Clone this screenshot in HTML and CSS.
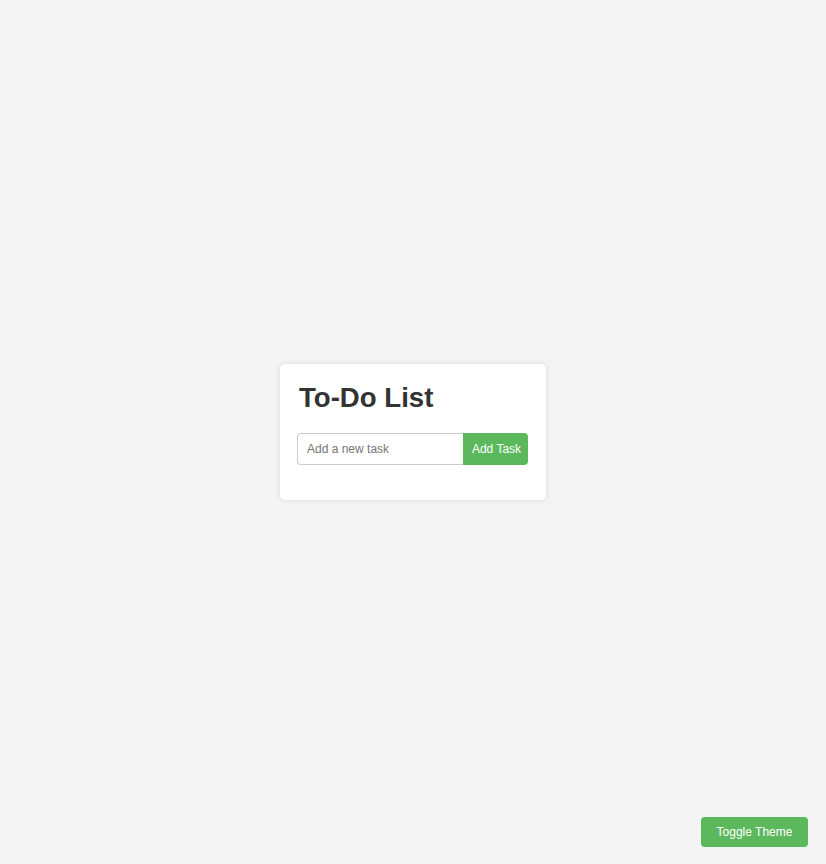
FILE: index.html
```html
<!DOCTYPE html>
<html lang="en">
<head>
<meta charset="utf-8">
<title>To-Do List</title>
<link rel="stylesheet" href="styles.css">
</head>
<body>
<div class="card">
  <h1 class="title">To-Do List</h1>
  <div class="add-row">
    <input class="task-input" type="text" placeholder="Add a new task">
    <button class="add-btn">Add Task</button>
  </div>
  <ul class="task-list"></ul>
</div>
<button class="theme-btn">Toggle Theme</button>
</body>
</html>
```
FILE: styles.css
```css
html, body {
  margin: 0;
  padding: 0;
}
body {
  background: #f4f4f4;
  font-family: "Liberation Sans", Arial, sans-serif;
  color: #333;
  height: 100vh;
  display: flex;
  align-items: center;
  justify-content: center;
}
.card {
  width: 231px;
  background: #fff;
  border-radius: 5px;
  padding: 18px 18px 0 17px;
  box-shadow: 0 0 6px rgba(0,0,0,0.1);
  height: 118px;
}
.title {
  margin: 0 0 19px 2px;
  font-size: 27.6px;
  font-weight: bold;
  line-height: 32px;
  color: #333;
}
.add-row {
  display: flex;
  height: 32px;
}
.task-input {
  flex: 1;
  min-width: 0;
  box-sizing: border-box;
  height: 32px;
  border: 1px solid #ccc;
  border-right: none;
  border-radius: 4px 0 0 4px;
  padding: 0 9px;
  font-family: "Liberation Sans", Arial, sans-serif;
  font-size: 12px;
  color: #333;
  outline: none;
}
.task-input::placeholder {
  color: #757575;
}
.add-btn {
  width: 65px;
  height: 32px;
  border: none;
  border-radius: 0 4px 4px 0;
  background: #5cb85c;
  color: #fff;
  font-family: "Liberation Sans", Arial, sans-serif;
  font-size: 12px;
  padding: 0 0 0 2px;
}
.task-list {
  margin: 0;
  padding: 0;
  list-style: none;
}
.theme-btn {
  position: fixed;
  right: 18px;
  bottom: 17px;
  width: 107px;
  height: 30px;
  border: none;
  border-radius: 4px;
  background: #5cb85c;
  color: #fff;
  font-family: "Liberation Sans", Arial, sans-serif;
  font-size: 12px;
  padding: 0;
}
```
